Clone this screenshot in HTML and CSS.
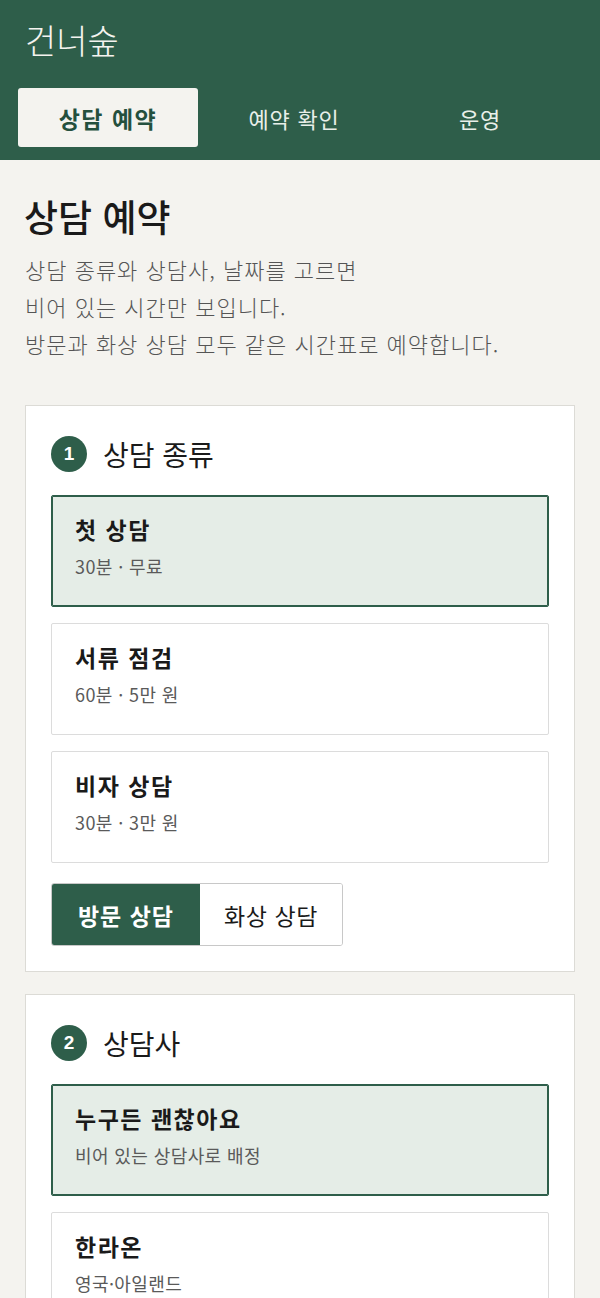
FILE: index.html
```html
<!DOCTYPE html>
<html lang="ko">
<head>
<meta charset="utf-8">
<title>건너숲 상담 예약</title>
<link rel="stylesheet" href="styles.css">
</head>
<body>
<header class="topbar">
  <div class="brand">건너숲</div>
  <nav class="tabs">
    <a class="tab tab-active">상담 예약</a>
    <a class="tab">예약 확인</a>
    <a class="tab">운영</a>
  </nav>
</header>
<main class="page">
  <h1 class="page-title">상담 예약</h1>
  <p class="intro">상담 종류와 상담사, 날짜를 고르면<br>비어 있는 시간만 보입니다.<br>방문과 화상 상담 모두 같은 시간표로 예약합니다.</p>

  <section class="card">
    <h2 class="step"><span class="step-num">1</span><span class="step-title">상담 종류</span></h2>
    <div class="options">
      <div class="option option-selected">
        <div class="option-title">첫 상담</div>
        <div class="option-sub">30분 · 무료</div>
      </div>
      <div class="option">
        <div class="option-title">서류 점검</div>
        <div class="option-sub">60분 · 5만 원</div>
      </div>
      <div class="option">
        <div class="option-title">비자 상담</div>
        <div class="option-sub">30분 · 3만 원</div>
      </div>
    </div>
    <div class="toggle">
      <span class="toggle-item toggle-on">방문 상담</span>
      <span class="toggle-item">화상 상담</span>
    </div>
  </section>

  <section class="card">
    <h2 class="step"><span class="step-num">2</span><span class="step-title">상담사</span></h2>
    <div class="options">
      <div class="option option-selected">
        <div class="option-title">누구든 괜찮아요</div>
        <div class="option-sub">비어 있는 상담사로 배정</div>
      </div>
      <div class="option">
        <div class="option-title">한라온</div>
        <div class="option-sub">영국·아일랜드</div>
      </div>
    </div>
  </section>
</main>
</body>
</html>
```

FILE: styles.css
```css
* { box-sizing: border-box; }
html, body { margin: 0; padding: 0; }
body {
  background: #f4f3ef;
  color: #1c1c1c;
  font-family: "Noto Sans CJK KR", "Noto Sans", sans-serif;
  overflow: hidden;
}
.topbar {
  background: #2e5e4a;
  padding: 16px 18px 13px;
}
.brand {
  font-family: "Noto Sans CJK KR", serif;
  font-weight: 300;
  color: #f4f3ef;
  font-size: 34px;
  line-height: 48px;
  padding-left: 7px;
  margin-bottom: 24px;
}
.tabs {
  display: grid;
  grid-template-columns: repeat(3, 180px);
  column-gap: 6px;
}
.tab {
  display: flex;
  align-items: center;
  justify-content: center;
  height: 59px;
  border-radius: 3px;
  color: #e9efe9;
  font-size: 22px;
  letter-spacing: 0.8px;
}
.tab-active {
  background: #f4f3ef;
  color: #24503e;
  font-weight: 700;
  font-size: 23px;
  letter-spacing: 1.5px;
}
.page {
  padding: 0 25px 40px;
}
.page-title {
  font-weight: 500;
  font-size: 37px;
  line-height: 50px;
  margin: 31px 0 10px -1px;
  color: #1a1a1a;
}
.intro {
  margin: 0 0 43px;
  font-size: 22px;
  letter-spacing: 1px;
  line-height: 37px;
  color: #555;
  font-weight: 300;
}
.card {
  background: #fff;
  border: 1px solid #dcdbd6;
  padding: 25px 25px 25px;
  margin-bottom: 22px;
}
.step {
  display: flex;
  align-items: center;
  gap: 16px;
  margin: 0 0 18px;
  font-weight: 400;
}
.step-num {
  width: 36px;
  height: 36px;
  border-radius: 50%;
  background: #2e5e4a;
  color: #fff;
  font-family: "Liberation Sans", sans-serif;
  font-size: 19px;
  font-weight: 700;
  display: flex;
  align-items: center;
  justify-content: center;
}
.step-title {
  font-size: 28px;
  line-height: 46px;
  color: #1a1a1a;
}
.options {
  display: flex;
  flex-direction: column;
  gap: 16px;
}
.option {
  border: 1px solid #dcdcdc;
  border-radius: 2px;
  padding: 18px 23px 26px;
  background: #fff;
}
.option-selected {
  border-color: #2e5e4a;
  box-shadow: inset 0 0 0 1px #2e5e4a;
  background: #e5ede7;
}
.option-title {
  font-size: 23px;
  letter-spacing: 1.5px;
  font-weight: 700;
  line-height: 30px;
  color: #1a1a1a;
}
.option-sub {
  margin-top: 8px;
  font-size: 18px;
  letter-spacing: 0.4px;
  line-height: 28px;
  color: #5a5a5a;
}
.toggle {
  display: inline-flex;
  margin-top: 20px;
  border: 1px solid #c8c8c8;
  border-radius: 3px;
  overflow: hidden;
}
.toggle-item {
  display: flex;
  align-items: center;
  justify-content: center;
  height: 61px;
  width: 142px;
  font-size: 23px;
  letter-spacing: 0.6px;
  color: #1a1a1a;
  background: #fff;
}
.toggle-on {
  width: 148px;
  background: #2e5e4a;
  color: #fff;
  font-weight: 700;
  letter-spacing: 1px;
}
```
